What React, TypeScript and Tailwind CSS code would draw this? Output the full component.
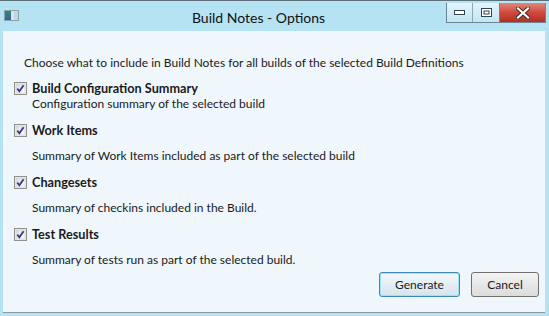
import React from "react";

const items = [
  { label: "Build Configuration Summary", desc: "Configuration summary of the selected build", gap: "mt-0" },
  { label: "Work Items", desc: "Summary of Work Items included as part of the selected build", gap: "mt-[10px]" },
  { label: "Changesets", desc: "Summary of checkins included in the Build.", gap: "mt-[10px]" },
  { label: "Test Results", desc: "Summary of tests run as part of the selected build.", gap: "mt-[10px]" },
];

function CheckBox() {
  return (
    <svg width="13" height="13" viewBox="0 0 13 13" className="shrink-0">
      <defs>
        <linearGradient id="cbg" x1="0" y1="0" x2="1" y2="1">
          <stop offset="0" stopColor="#dcdcdc" />
          <stop offset="1" stopColor="#ffffff" />
        </linearGradient>
      </defs>
      <rect x="0.5" y="0.5" width="12" height="12" fill="#f4f4f4" stroke="#8f8f8f" />
      <rect x="2" y="2" width="9" height="9" fill="url(#cbg)" stroke="#c6c6c6" strokeWidth="0.6" />
      <path d="M3.3 6.6 L5.4 9.2 L9.6 3.2" fill="none" stroke="#2f3a8f" strokeWidth="1.8" />
    </svg>
  );
}

function CaptionButtons() {
  return (
    <div className="mt-[2px] flex h-[20px] border border-[#6b8593] border-t-0">
      <div className="flex w-[26px] items-center justify-center border-r border-[#8fa8b5] bg-gradient-to-b from-[#e3f4fa] to-[#c2e6f3]">
        <svg width="11" height="6" viewBox="0 0 11 6">
          <rect x="0.5" y="0.5" width="10" height="4" fill="#ffffff" stroke="#33444e" />
        </svg>
      </div>
      <div className="flex w-[27px] items-center justify-center border-r border-[#6b8593] bg-gradient-to-b from-[#e3f4fa] to-[#c2e6f3]">
        <svg width="11" height="10" viewBox="0 0 11 10">
          <rect x="0.5" y="0.5" width="10" height="8" fill="#ffffff" stroke="#33444e" />
          <rect x="3" y="3" width="5" height="3" fill="#ffffff" stroke="#33444e" strokeWidth="1" />
        </svg>
      </div>
      <div className="flex w-[45px] items-center justify-center bg-gradient-to-b from-[#e3857c] via-[#cc4a3d] to-[#b52e22]">
        <svg width="14" height="12" viewBox="0 0 14 12">
          <path d="M2 1.5 L12 10.5 M12 1.5 L2 10.5" stroke="#3b2a2a" strokeWidth="4" strokeLinecap="square" />
          <path d="M2 1.5 L12 10.5 M12 1.5 L2 10.5" stroke="#ffffff" strokeWidth="2.2" strokeLinecap="square" />
        </svg>
      </div>
    </div>
  );
}

export default function App() {
  return (
    <div
      className="flex h-[316px] w-[549px] flex-col border-t border-[#5f6f78] bg-[#b5e3f3] text-[12px] text-[#1a1a1a]"
      style={{ fontFamily: 'Lato, "Noto Sans", "Liberation Sans", sans-serif' }}
    >
      <div className="flex h-[30px] shrink-0">
        <div className="ml-[4px] mt-[9px] flex h-[11px] w-[15px] overflow-hidden border border-[#8aa0ab] bg-[#e8f0f3]">
          <div className="w-[6px] bg-gradient-to-b from-[#2f8a6a] to-[#3a5fa8]" />
          <div className="w-[3px] bg-[#d8e4ea]" />
          <div className="w-[4px] bg-[#c7d6de]" />
        </div>
        <div className="flex-1 pl-[52px] pt-[6px] text-center text-[14px] text-[#111]">Build Notes - Options</div>
        <div className="mr-[3px]">
          <CaptionButtons />
        </div>
      </div>
      <div className="mx-[3px] mr-[4px] flex h-[282px] flex-col border-b border-[#8c979e] bg-[#eff7fd] pl-[11px] pr-[6px] pt-[24px]">
        <div className="h-[16px] pl-[10px] leading-[16px]">
          Choose what to include in Build Notes for all builds of the selected Build Definitions
        </div>
        <div className="mt-[9px] flex flex-col">
          {items.map((it) => (
            <div key={it.label} className={it.gap}>
              <div className="flex h-[16px] items-center gap-[5px]">
                <CheckBox />
                <span className="text-[12.7px] font-bold leading-[16px]">{it.label}</span>
              </div>
              <div className={(it.gap === "mt-0" ? "mt-0" : "mt-[10px]") + " h-[16px] pl-[18px] leading-[16px]"}>
                {it.desc}
              </div>
            </div>
          ))}
        </div>
        <div className="mt-[4px] flex justify-end gap-[11px]">
          <button className="h-[25px] w-[81px] rounded-[3px] border border-[#3d8ab8] bg-gradient-to-b from-[#f3f9fc] to-[#d5e4ec] shadow-[inset_0_0_0_1px_#9de2f5] text-[12px]">
            Generate
          </button>
          <button className="h-[25px] w-[68px] rounded-[3px] border border-[#707070] bg-gradient-to-b from-[#f3f3f3] to-[#dcdcdc] text-[12px]">
            Cancel
          </button>
        </div>
      </div>
    </div>
  );
}
